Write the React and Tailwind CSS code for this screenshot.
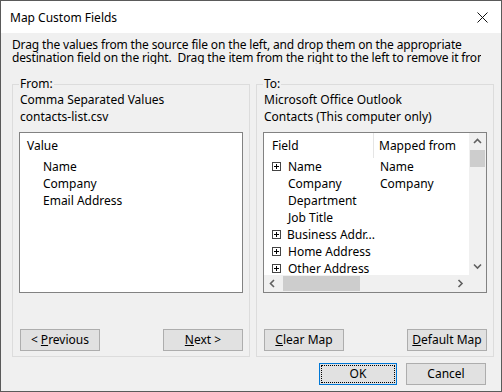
import React from "react";

function Btn({ children, className = "" }) {
  return (
    <button
      className={`h-[22px] w-[80px] bg-[#e1e1e1] border border-[#adadad] text-[12px] leading-[14px] text-black flex items-center justify-center ${className}`}
    >
      {children}
    </button>
  );
}

function PlusBox() {
  return (
    <svg width="9" height="9" viewBox="0 0 9 9" className="shrink-0">
      <rect x="0.5" y="0.5" width="8" height="8" fill="white" stroke="#444" />
      <path d="M2 4.5H7M4.5 2V7" stroke="#000" />
    </svg>
  );
}

function Chevron({ dir }) {
  const paths = {
    up: "M1 5L4.5 1.5L8 5",
    down: "M1 1.5L4.5 5L8 1.5",
    left: "M5 1L1.5 4.5L5 8",
    right: "M1.5 1L5 4.5L1.5 8",
  };
  const vertical = dir === "up" || dir === "down";
  return (
    <svg
      width={vertical ? 9 : 7}
      height={vertical ? 7 : 9}
      viewBox={vertical ? "0 0 9 7" : "0 0 7 9"}
    >
      <path d={paths[dir]} fill="none" stroke="#606060" strokeWidth="1.6" />
    </svg>
  );
}

const fields = [
  { name: "Name", plus: true, mapped: "Name" },
  { name: "Company", mapped: "Company" },
  { name: "Department" },
  { name: "Job Title" },
  { name: "Business Addr...", plus: true },
  { name: "Home Address", plus: true },
  { name: "Other Address", plus: true },
  { name: "E-mail", plus: true },
];

export default function App() {
  return (
    <div className="w-[502px] h-[392px] border border-[#5a5a5a] bg-[#f0f0f0] flex flex-col font-['Noto_Sans',sans-serif] text-black text-[12px] overflow-hidden">
      {/* title bar */}
      <div className="h-[32px] bg-white flex items-center justify-between pl-[9px] pr-[13px] shrink-0">
        <span className="text-[12px] mt-[1px]">Map Custom Fields</span>
        <svg width="11" height="11" viewBox="0 0 11 11">
          <path d="M0.5 0.5L10.5 10.5M10.5 0.5L0.5 10.5" stroke="#111" strokeWidth="1" />
        </svg>
      </div>

      {/* description */}
      <div className="pt-[5px] pl-[11px] w-[480px] leading-[13px] whitespace-pre overflow-hidden tracking-[-0.15px]">
        <div>Drag the values from the source file on the left, and drop them on the appropriate</div>
        <div>destination field on the right.  Drag the item from the right to the left to remove it from the</div>
      </div>

      <div className="flex gap-[6px] pl-[11px] mt-[13px]">
        {/* From */}
        <fieldset className="w-[238px] border border-[#dcdcdc] px-[6px] pb-[5px] flex flex-col">
          <legend className="px-[1px] leading-[14px]">From:</legend>
          <div className="leading-[17px] pl-[1px]">
            <div>Comma Separated Values</div>
            <div>contacts-list.csv</div>
          </div>
          <div className="mt-[7px] h-[161px] border border-[#828282] bg-white pl-[7px]">
            <div className="h-[25px] flex items-center">Value</div>
            <div className="pl-[16px] leading-[17px]">
              <div>Name</div>
              <div>Company</div>
              <div>Email Address</div>
            </div>
          </div>
          <div className="mt-[36px] flex justify-between pl-[1px]">
            <Btn>
              &lt; <span className="underline ml-[3px]">P</span>revious
            </Btn>
            <Btn>
              <span className="underline">N</span>ext &gt;
            </Btn>
          </div>
        </fieldset>

        {/* To */}
        <fieldset className="w-[238px] border border-[#dcdcdc] px-[6px] pb-[5px] flex flex-col">
          <legend className="px-[1px] leading-[14px]">To:</legend>
          <div className="leading-[17px] pl-[1px]">
            <div>Microsoft Office Outlook</div>
            <div>Contacts (This computer only)</div>
          </div>
          <div className="mt-[7px] h-[161px] border border-[#828282] bg-white flex flex-col">
            <div className="flex flex-1 min-h-0">
              <div className="flex-1 overflow-hidden">
                <div className="h-[25px] flex">
                  <div className="w-[110px] pl-[8px] flex items-center border-r border-[#e5e5e5]">Field</div>
                  <div className="pl-[5px] flex items-center whitespace-nowrap">Mapped from</div>
                </div>
                {fields.map((f) => (
                  <div key={f.name} className="h-[17px] flex items-center">
                    <div className="w-[111px] pl-[8px] flex items-center whitespace-nowrap">
                      <div className="w-[16px]">{f.plus && <PlusBox />}</div>
                      <span>{f.name}</span>
                    </div>
                    <div className="pl-[5px] whitespace-nowrap">{f.mapped}</div>
                  </div>
                ))}
              </div>
              {/* vertical scrollbar */}
              <div className="w-[17px] bg-[#f0f0f0] flex flex-col items-center">
                <div className="h-[17px] flex items-center justify-center">
                  <Chevron dir="up" />
                </div>
                <div className="w-[15px] h-[17px] bg-[#cdcdcd]" />
                <div className="flex-1" />
                <div className="h-[17px] flex items-center justify-center">
                  <Chevron dir="down" />
                </div>
              </div>
            </div>
            {/* horizontal scrollbar */}
            <div className="h-[17px] flex bg-[#f0f0f0] shrink-0">
              <div className="w-[17px] flex items-center justify-center">
                <Chevron dir="left" />
              </div>
              <div className="ml-[2px] w-[77px] h-[15px] mt-[1px] bg-[#cdcdcd]" />
              <div className="flex-1" />
              <div className="w-[17px] flex items-center justify-center">
                <Chevron dir="right" />
              </div>
              <div className="w-[17px]" />
            </div>
          </div>
          <div className="mt-[36px] flex justify-between pl-[1px]">
            <Btn>
              <span className="underline">C</span>lear Map
            </Btn>
            <Btn>
              <span className="underline">D</span>efault Map
            </Btn>
          </div>
        </fieldset>
      </div>

      {/* dialog buttons */}
      <div className="flex justify-end gap-[9px] pr-[15px] mt-[6px]">
        <button className="h-[22px] w-[78px] border border-[#0078d7] bg-[#e1e1e1] p-[1px] text-[12px]">
          <div className="w-full h-full border border-dotted border-black flex items-center justify-center">
            OK
          </div>
        </button>
        <Btn className="w-[79px]">Cancel</Btn>
      </div>
    </div>
  );
}
